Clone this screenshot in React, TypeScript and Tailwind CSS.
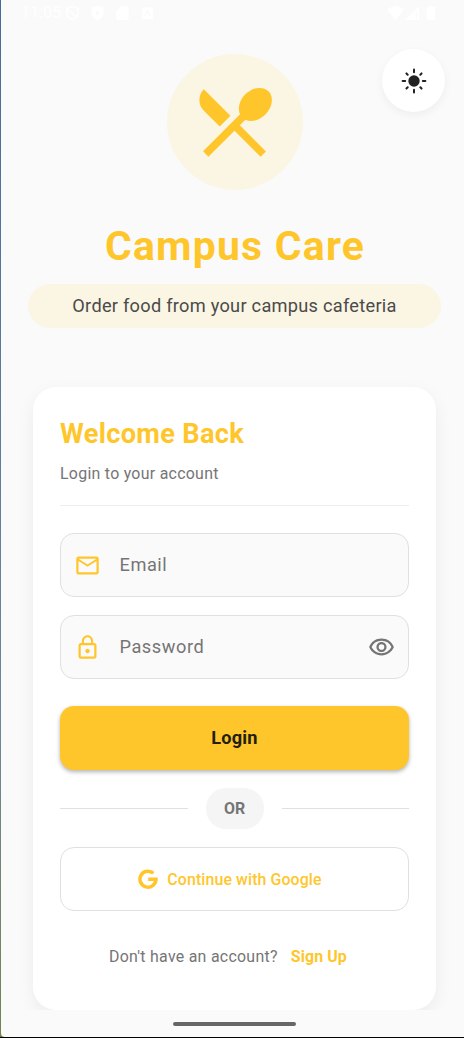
import type { ReactNode } from "react";
import {
  MdRestaurantMenu,
  MdOutlineEmail,
  MdLockOutline,
  MdOutlineVisibility,
} from "react-icons/md";

function SunIcon() {
  const rays = [0, 45, 90, 135, 180, 225, 270, 315];
  return (
    <svg width="26" height="26" viewBox="-13 -13 26 26" fill="none">
      <circle r="5.7" fill="#222222" />
      {rays.map((angle) => (
        <line
          key={angle}
          x1="0"
          x2="0"
          y1={angle % 90 === 0 ? -11.4 : -10.7}
          y2={angle % 90 === 0 ? -8.8 : -8.9}
          stroke="#222222"
          strokeWidth="2"
          strokeLinecap="round"
          transform={`rotate(${angle})`}
        />
      ))}
    </svg>
  );
}

function GoogleIcon() {
  return (
    <svg width="20" height="20" viewBox="0 0 20 20" fill="none">
      <path d="M15.4 4.3A8 8 0 1 0 17.95 10.300H10.200" stroke="#ffc62c" strokeWidth="3.500" />
    </svg>
  );
}

function StatusBar() {
  return (
    <div className="flex h-[25px] shrink-0 items-center justify-between pl-5 pr-[28px] text-white">
      <div className="flex items-center">
        <span className="w-[44px] text-[16px] leading-none tracking-[0.1px]">11:05</span>
        <div className="flex items-center gap-[10px]">
          <svg width="15" height="16" viewBox="0 0 15 16" fill="none" stroke="white" strokeWidth="1.5">
            <path d="M7.5 1.2 13 3.2v4.5c0 3.2-2.3 5.8-5.5 7-3.200-1.200-5.500-3.800-5.500-7V3.200ZM2.500 3.500l9 8.500" />
          </svg>
          <svg width="15" height="16" viewBox="0 0 15 16">
            <path fillRule="evenodd" fill="white" d="M7.500.500 13.500 2.700v5c0 3.500-2.500 6.500-6 7.800-3.500-1.300-6-4.300-6-7.800v-5ZM6 5v5.500L10 7.800Z" />
          </svg>
          <svg width="15" height="16" viewBox="0 0 15 16">
            <path fill="white" d="M6.500 1H12a1.500 1.500 0 0 1 1.500 1.500V15h-11a1 1 0 0 1-1-1V6Z" />
          </svg>
          <svg width="15" height="16" viewBox="0 0 15 16">
            <path fillRule="evenodd" fill="white" d="M3.500 2.500h8a1.500 1.500 0 0 1 1.500 1.500v8.500a1.500 1.500 0 0 1-1.500 1.500h-8A1.500 1.500 0 0 1 2 12.500V4a1.500 1.500 0 0 1 1.500-1.500ZM7 5l-2.800 6h1.300L7.500 7l2 4h1.300L8 5Z" />
          </svg>
        </div>
      </div>
      <div className="flex items-center">
        <svg width="17" height="16" viewBox="0 0 17 16">
          <path fill="white" d="M0 4.500Q8.500-2.500 17 4.500L8.500 15Z" />
        </svg>
        <svg width="16" height="16" viewBox="0 0 16 16">
          <path fillRule="evenodd" fill="white" d="M1 15 15 1v14ZM11.500 7v6.500h1.500V5.500Z" />
        </svg>
        <svg className="ml-[6px]" width="10" height="16" viewBox="0 0 10 16">
          <path fill="white" d="M3.500.500h3V2h2.800v13.300H.700V2h2.800Z" />
        </svg>
      </div>
    </div>
  );
}

function Field({ icon, label, trailing }: { icon: ReactNode; label: string; trailing?: ReactNode }) {
  return (
    <div className="flex h-16 shrink-0 items-center rounded-[14px] border border-[#e0e0e0] bg-[#fafafa] px-[13px]">
      {icon}
      <span className="ml-[18.5px] flex-1 text-[18.2px] leading-none tracking-[0.55px] text-[#757575]">
        {label}
      </span>
      {trailing}
    </div>
  );
}

export default function App() {
  return (
    <div className="flex h-[1038px] w-[464px] flex-col overflow-hidden bg-black font-['Roboto',sans-serif]">
      <div className="flex h-[1037px] bg-gradient-to-b from-[#466b9f] via-[#6f8799] via-70% to-[#74844d]">
        <main className="ml-px flex w-[463px] flex-col overflow-hidden rounded-bl-[4px] bg-[#fafafa]">
          <div className="relative flex h-[1010px] shrink-0 flex-col overflow-hidden">
            <StatusBar />

            <button className="absolute left-[381px] top-[49px] flex h-[63px] w-[63px] items-center justify-center rounded-full bg-white shadow-[0_3px_9px_rgba(0,0,0,0.05)]">
              <SunIcon />
            </button>

            <header className="flex shrink-0 flex-col items-center">
              <div className="ml-[4px] mt-[28.5px] flex h-[136px] w-[136px] items-center justify-center rounded-full bg-[#fbf5e4]">
                <MdRestaurantMenu size={91} color="#ffc62c" />
              </div>
              <h1 className="ml-[5px] mt-[31.5px] whitespace-nowrap text-[40.9px] font-bold leading-[50px] tracking-[1.25px] text-[#ffc62c]">
                Campus Care
              </h1>
              <div className="ml-[4px] mt-[13px] flex h-11 w-[413px] items-center justify-center rounded-full bg-[#fbf5e4] text-[18.2px] tracking-[0.27px] text-[#4a4a4a]">
                Order food from your campus cafeteria
              </div>
            </header>

            <section className="ml-8 mt-[59px] flex h-[623px] w-[403px] shrink-0 flex-col rounded-[23px] bg-white px-[27px] shadow-[0_6px_18px_rgba(0,0,0,0.06)]">
              <h2 className="mt-[31px] text-[27.2px] font-bold leading-8 tracking-[0.32px] text-[#ffc62c]">
                Welcome Back
              </h2>
              <p className="mt-[14px] text-[15.9px] leading-5 tracking-[0.28px] text-[#757575]">
                Login to your account
              </p>
              <div className="mb-[27px] mt-[21px] h-px shrink-0 bg-[#eeeeee]" />
              <Field icon={<MdOutlineEmail size={27} color="#ffc62c" />} label="Email" />
              <div className="h-[18px] shrink-0" />
              <Field
                icon={<MdLockOutline size={27} color="#ffc62c" />}
                label="Password"
                trailing={<MdOutlineVisibility size={27} color="#757575" />}
              />
              <button className="mt-[27px] h-16 shrink-0 rounded-[14px] bg-[#ffc62c] text-[18.2px] font-bold tracking-[0.2px] text-[#231f0c] shadow-[0_2px_4px_rgba(0,0,0,0.3)]">
                Login
              </button>
              <div className="mt-[18px] flex h-[41px] shrink-0 items-center">
                <div className="h-px flex-1 bg-[#e0e0e0]" />
                <div className="mx-[18px] flex h-[41px] w-[58px] items-center justify-center rounded-[20px] bg-[#f5f5f5] text-[15.9px] font-bold text-[#757575]">
                  OR
                </div>
                <div className="h-px flex-1 bg-[#e0e0e0]" />
              </div>
              <button className="mt-[18px] flex h-16 shrink-0 items-center justify-center gap-[9px] rounded-[14px] border border-[#e0e0e0] bg-white pr-[9px] text-[15.9px] font-medium tracking-[0.11px] text-[#ffc62c]">
                <GoogleIcon />
                <span className="pt-px">Continue with Google</span>
              </button>
              <div className="mt-[36px] flex shrink-0 items-center pl-[49px] text-[15.9px] leading-5 tracking-[0.28px]">
                <span className="text-[#757575]">Don't have an account?</span>
                <span className="ml-[13px] font-bold tracking-[0.12px] text-[#ffc62c]">Sign Up</span>
              </div>
            </section>
          </div>
          <div className="flex flex-1 items-center justify-center pl-[4px]">
            <div className="h-[4px] w-[123px] rounded-full bg-[#666666]" />
          </div>
        </main>
      </div>
    </div>
  );
}
